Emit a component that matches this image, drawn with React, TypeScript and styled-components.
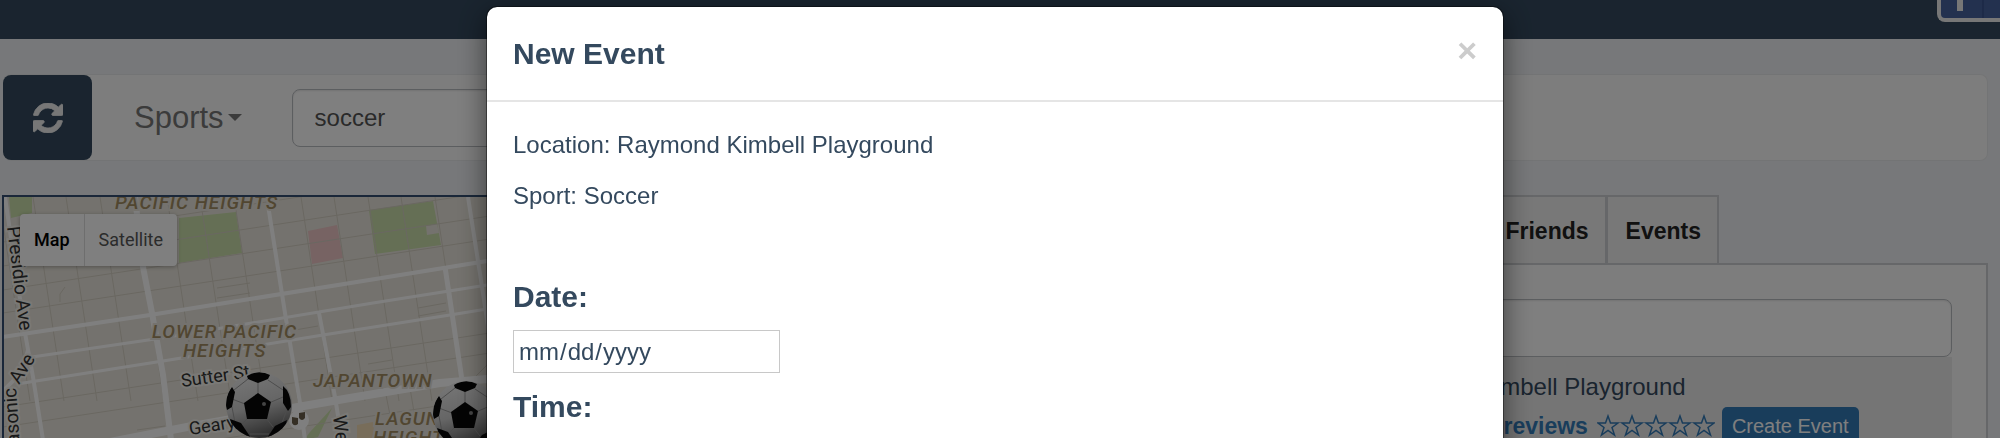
import React from 'react';
import styled, { createGlobalStyle } from 'styled-components';

const GlobalStyle = createGlobalStyle`
  *, *::before, *::after { box-sizing: border-box; }
  body {
    margin: 0;
    background: #eff1f4;
    color: #34495e;
    font-family: 'Liberation Sans', Arial, sans-serif;
    font-size: 24px;
    line-height: 34px;
  }
  button, input { font: inherit; color: inherit; }
`;

const Page = styled.div`
  display: flex;
  flex-direction: column;
  height: 100vh;
  overflow: hidden;
`;

const Navbar = styled.header`
  display: flex;
  flex: none;
  justify-content: flex-end;
  align-items: flex-start;
  height: 39px;
  overflow: hidden;
  background: #34495e;
`;

const FacebookButton = styled.button`
  flex: none;
  display: block;
  width: 63px;
  height: 22px;
  padding: 0;
  border: solid #eee;
  border-width: 0 0 4px 4px;
  border-radius: 0 0 0 8px;
  background: #47639f;
  svg { display: block; }
`;

const Toolbar = styled.section`
  display: flex;
  flex: none;
  align-items: center;
  height: 87px;
  margin: 35px 12px 0 3px;
  border: 1px solid #e7e9eb;
  border-left: 0;
  border-radius: 8px;
  background: #fbfbfb;
`;

const RefreshButton = styled.button`
  display: grid;
  place-items: center;
  width: 89px;
  height: 85px;
  padding: 0;
  border: 0;
  border-radius: 8px;
  background: #34495e;
  color: #eee;
`;

const SportsMenu = styled.button`
  display: flex;
  align-items: center;
  gap: 4px;
  margin: 0 50px 0 42px;
  padding: 0;
  border: 0;
  background: none;
  color: #777;
  font-size: 31px;
`;

const Caret = styled.span`
  border: solid transparent;
  border-width: 7px 7px 0;
  border-top-color: #777;
`;

const TextField = styled.input`
  height: 58px;
  width: ${(p) => p.width || '100%'};
  padding: 0 22px;
  border: 1px solid #b9bcc0;
  border-radius: 8px;
  background: #fff;
  color: #555;
  box-shadow: inset 0 1px 2px rgba(0, 0, 0, 0.1);
`;

const Workspace = styled.main`
  display: flex;
  flex: 1;
  min-height: 0;
  margin: 34px 12px 0 2px;
`;

const MapPanel = styled.section`
  position: relative;
  flex: 1;
  overflow: hidden;
  border: 2px solid #344f72;
  border-bottom: 0;
  background: #e9e5dc;
`;

const MapDrawing = styled.svg`
  display: block;
  font-family: Roboto, sans-serif;
`;

const MapTypes = styled.div`
  position: absolute;
  top: 17px;
  left: 16px;
  display: flex;
  border-radius: 4px;
  background: #fff;
  box-shadow: 0 1px 4px rgba(0, 0, 0, 0.3);
`;

const MapType = styled.button<{ $active?: boolean }>`
  height: 52px;
  padding: 0 14px;
  border: 0;
  border-left: ${(p) => (p.$active ? '0' : '1px solid #ddd')};
  background: none;
  font-family: Roboto, sans-serif;
  font-size: 18px;
  font-weight: ${(p) => (p.$active ? 500 : 400)};
  color: ${(p) => (p.$active ? '#000' : '#565656')};
`;

const Side = styled.aside`
  display: flex;
  flex-direction: column;
  width: 32%;
`;

const TabList = styled.div`
  display: flex;
  padding-left: 134px;
`;

const Tab = styled.button`
  height: 68px;
  padding: 2px 16px 0 18px;
  border: 2px solid #cdcfd2;
  border-bottom: 0;
  border-left-width: 1px;
  background: #f1f1f1;
  color: #222;
  font-size: 23px;
  font-weight: 700;
`;

const TabPanel = styled.div`
  flex: 1;
  padding: 34px 34px 0 15px;
  border: 2px solid #cdcfd2;
  border-bottom: 0;
  background: #fafafa;
`;

const Place = styled.article`
  display: flex;
  flex-direction: column;
  gap: 3px;
  padding: 13px 0 20px;
  background: #ebebeb;
`;

const PlaceName = styled.p`
  margin: 0;
`;

const PlaceActions = styled.div`
  display: flex;
  align-items: center;
  padding-left: 134px;
`;

const ReviewsLink = styled.a`
  color: #337ab7;
  font-size: 23px;
  font-weight: 700;
  text-decoration: none;
`;

const Stars = styled.svg`
  margin: 0 7px 0 9px;
`;

const CreateButton = styled.button`
  height: 38px;
  padding: 0 10px;
  border: 0;
  border-radius: 5px;
  background: #337ab7;
  color: #fff;
  font-size: 20px;
`;

const Backdrop = styled.div`
  position: fixed;
  inset: 0;
  display: flex;
  justify-content: center;
  padding: 6px 10px 0 0;
  overflow: hidden;
  background: rgba(0, 0, 0, 0.5);
`;

const Modal = styled.div`
  flex: none;
  width: calc(100% - 40px);
  max-width: 1018px;
  height: max-content;
  border: 1px solid rgba(0, 0, 0, 0.4);
  border-radius: 11px;
  background: #fff;
  background-clip: padding-box;
  box-shadow: 0 8px 28px rgba(0, 0, 0, 0.5);
`;

const ModalHeader = styled.header`
  display: flex;
  align-items: center;
  justify-content: space-between;
  height: 95px;
  padding: 0 26px;
  border-bottom: 2px solid #e5e5e5;
`;

const Title = styled.h2`
  margin: 0;
  font-size: 30px;
`;

const CloseButton = styled.button`
  padding: 0 0 8px;
  border: 0;
  background: none;
  color: #ccc;
  font-size: 34px;
  font-weight: 700;
`;

const ModalBody = styled.div`
  padding: 26px 26px 40px;
`;

const Fact = styled.p`
  margin: 0 0 17px;
`;

const Form = styled.form`
  display: flex;
  flex-direction: column;
  align-items: flex-start;
  padding-top: 50px;
`;

const Label = styled.label`
  margin-bottom: 16px;
  font-size: 30px;
  font-weight: 700;
`;

const WhenInput = styled.input`
  width: 267px;
  height: 43px;
  margin-bottom: 17px;
  padding: 0 4px;
  border: 1px solid #c8c8c8;
  border-radius: 0;
  background: #fff;
  &::-webkit-calendar-picker-indicator { display: none; }
`;

const verticals = Array.from({ length: 15 }, (_, i) => Math.round(-1 + i * 33.5));
const horizontals = [206, 230, 254, 277, 371, 391, 436];

const Ball = ({ x, y }: { x: number; y: number }) => (
  <g transform={`translate(${x} ${y})`}>
    <circle r="33" fill="url(#leather)" />
    <g fill="none" stroke="#999" strokeWidth="1">
      <path d="M-1-10V-23M10-2 24-8M-14-1-27-6M-11 13-18 20M7 13 14 22M-11-26-25-15M9-25 24-15M-27 2-24 18M28 4 23 18M-9 29H10" />
    </g>
    <g clipPath="url(#ballEdge)" fill="#080808">
      <path d="M-1-12 12-3 8 14-12 14-15-2Z" />
      <path d="M-12-29Q0-36 11-30L9-26-1-22-11-26Z" />
      <path d="M24-19Q32-13 32 2L29 6 24-2Z" />
      <path d="M-27-18-24-13-27 2-32 5Q-36-6-27-18Z" />
      <path d="M-29 14-18 18-8 33Q-24 36-29 14Z" />
      <path d="M28 15 16 21 8 33Q24 34 28 15Z" />
    </g>
    <circle cx="5" cy="-1" r="2" fill="#888" />
  </g>
);

const StreetMap = () => (
  <MapDrawing width="1100" height="500" viewBox="4 197 1100 500" role="img" aria-label="Street map">
    <defs>
      <linearGradient id="leather" x1="0.3" y1="0" x2="0.6" y2="1">
        <stop offset="0" stopColor="#eee" />
        <stop offset="0.5" stopColor="#ccc" />
        <stop offset="1" stopColor="#555" />
      </linearGradient>
      <clipPath id="ballEdge"><circle r="33" /></clipPath>
    </defs>
    <g fill="#cadfaa">
      <path d="M9 197H32V213L11 218Z" />
      <path d="M179 218 236 212 242 253 179 263Z" />
      <path d="M369 210 433 201 441 245 375 254Z" />
      <path d="M332 408 310 432 304 440 318 437Z" />
    </g>
    <path d="M426 226 437 224 439 233 427 235Z" fill="#e9e5dc" />
    <path d="M308 231 337 225 343 258 312 264Z" fill="#eec6c6" />
    <path d="M357 425 373 422 375 440H357Z" fill="#f0dab4" />
    <g stroke="#d4cfc3" strokeWidth="1" fill="none">
      {verticals.map((x) => <path key={x} d={`M${x} 197 ${x + 31} 401`} />)}
      {horizontals.map((y) => <path key={y} d={`M3 ${y + 36} 240 ${y} 503 ${y - 40}`} />)}
      <path d="M60 302 60 294 65 287M217 288 250 283M217 298 250 293M418 308 446 303M418 316 446 311M295 330 318 326M368 364 392 360M472 380 490 362M385 390 390 415M410 388 414 412M137 430 165 426" />
    </g>
    <g stroke="#fff" fill="none" strokeLinejoin="round">
      <path strokeWidth="4" d="M3 337 63 328 150 315 250 299 363 281 487 261 520 256" />
      <path strokeWidth="3" d="M32 357 155 339 240 325 373 303 487 285 520 280" />
      <path strokeWidth="3" d="M17 384 163 361 323 335 450 315 487 309 520 304" />
      <path strokeWidth="8" d="M110 442 187 427 292 408 350 398 440 383 487 379 520 376" />
      <path strokeWidth="4" d="M5 197 15 265 25 333 33 377 43 440M0 394 22 372 28 350" />
      <path strokeWidth="6" d="M135 197 143 267 152 313 163 375 171 440" />
      <path strokeWidth="4" d="M268 205 285 313 300 403 305 440" />
      <path strokeWidth="4" d="M319 313 335 397 342 440" />
      <path strokeWidth="5" d="M445 267 462 380" />
      <path strokeWidth="4" d="M468 197 481 280 490 340" />
    </g>
    <g
      fill="#a38d62"
      stroke="#e9e5dc"
      strokeWidth="4"
      paintOrder="stroke"
      fontSize="19"
      fontWeight="500"
      fontStyle="italic"
      letterSpacing="1"
    >
      <text x="115" y="209">PACIFIC HEIGHTS</text>
      <text x="152" y="338">LOWER PACIFIC</text>
      <text x="183" y="357">HEIGHTS</text>
      <text x="313" y="387">JAPANTOWN</text>
      <text x="375" y="425">LAGUNA</text>
      <text x="373" y="444">HEIGHTS</text>
    </g>
    <g fill="#333" stroke="#f4f2ec" strokeWidth="4" paintOrder="stroke" fontSize="18">
      <text transform="translate(182 387) rotate(-8)">Sutter St</text>
      <text transform="translate(190 435) rotate(-9)">Geary</text>
      <text fontSize="19" transform="translate(7 227) rotate(83)">Presidio Ave</text>
      <text fontSize="19" transform="translate(21 460) rotate(-94)">Masonic</text>
      <text fontSize="19" transform="translate(19 385) rotate(-58)">Ave</text>
      <text fontSize="19" transform="translate(333 416) rotate(83)">Webster</text>
    </g>
    <circle cx="299" cy="420" r="10" fill="#fff" />
    <g fill="#6b5f4a">
      <path d="M292 417 298 418 298 424Q294 427 292 423Z" />
      <path d="M299 413 305 412 305 418Q302 422 299 418Z" />
    </g>
    <Ball x={259} y={405} />
    <Ball x={466} y={414} />
  </MapDrawing>
);

export default function App() {
  return (
    <>
      <GlobalStyle />
      <Page>
        <Navbar>
          <FacebookButton aria-label="Facebook">
            <svg width="59" height="18" viewBox="0 0 59 18">
              <path d="M16 0H22V11H16Z" fill="#eee" />
              <path d="M41 0H43V18H41Z" fill="#3b5590" />
            </svg>
          </FacebookButton>
        </Navbar>
        <Toolbar>
          <RefreshButton aria-label="Refresh">
            <svg width="30" height="30" viewBox="0 0 1536 1536" fill="currentColor" stroke="currentColor" strokeWidth="40">
              <path d="M1511 928q0 5-1 7-64 268-268 434t-478 167q-146 0-283-55t-243-157l-129 129q-19 19-45 19t-45-19-19-45v-448q0-26 19-45t45-19h448q26 0 45 19t19 45-19 45l-137 137q71 66 161 102t187 36q134 0 250-65t186-179q11-17 53-117 8-23 30-23h192q13 0 22 10t10 22z" />
              <path d="M1536 128v448q0 26-19 45t-45 19h-448q-26 0-45-19t-19-45 19-45l138-138q-148-137-349-137-134 0-250 65t-186 179q-11 17-53 117-8 23-30 23h-199q-13 0-22-10t-10-22v-7q65-268 270-434t480-167q146 0 284 56t245 156l130-129q19-19 45-19t45 19 19 45z" />
            </svg>
          </RefreshButton>
          <SportsMenu>Sports<Caret /></SportsMenu>
          <TextField aria-label="Sport" defaultValue="soccer" width="400px" />
        </Toolbar>
        <Workspace>
          <MapPanel>
            <StreetMap />
            <MapTypes>
              <MapType $active>Map</MapType>
              <MapType>Satellite</MapType>
            </MapTypes>
          </MapPanel>
          <Side>
            <TabList>
              <Tab>Friends</Tab>
              <Tab>Events</Tab>
            </TabList>
            <TabPanel>
              <TextField aria-label="Search" />
              <Place>
                <PlaceName>Raymond Kimbell Playground</PlaceName>
                <PlaceActions>
                  <ReviewsLink href="#reviews">reviews</ReviewsLink>
                  <Stars width="118" height="24" viewBox="0 0 118 24" fill="none" stroke="#337ab7" strokeWidth="1.5" role="img" aria-label="No rating">
                    {[0, 1, 2, 3, 4].map((i) => (
                      <path key={i} transform={`translate(${i * 24})`} d="M11 2 13.5 9H21L15 13.5 17.5 21 11 16.5 4.5 21 7 13.5 1 9H8.5Z" />
                    ))}
                  </Stars>
                  <CreateButton>Create Event</CreateButton>
                </PlaceActions>
              </Place>
            </TabPanel>
          </Side>
        </Workspace>
      </Page>
      <Backdrop>
        <Modal role="dialog" aria-labelledby="modal-title">
          <ModalHeader>
            <Title id="modal-title">New Event</Title>
            <CloseButton aria-label="Close">×</CloseButton>
          </ModalHeader>
          <ModalBody>
            <Fact>Location: Raymond Kimbell Playground</Fact>
            <Fact>Sport: Soccer</Fact>
            <Form>
              <Label htmlFor="date">Date:</Label>
              <WhenInput id="date" type="date" />
              <Label htmlFor="time">Time:</Label>
              <WhenInput id="time" type="time" />
            </Form>
          </ModalBody>
        </Modal>
      </Backdrop>
    </>
  );
}
